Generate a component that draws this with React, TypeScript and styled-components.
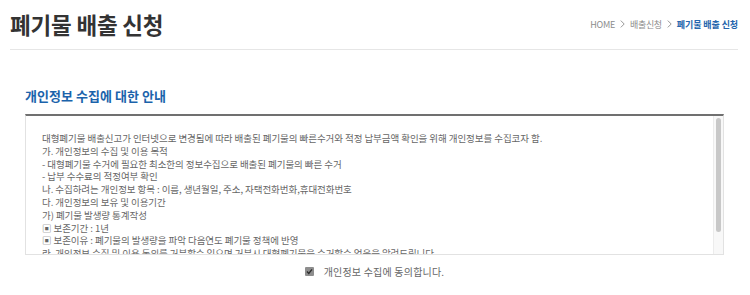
import React from "react";
import styled, { createGlobalStyle } from "styled-components";

const GlobalStyle = createGlobalStyle`
  html, body {
    margin: 0;
    padding: 0;
    background: #ffffff;
  }
  body {
    font-family: "Noto Sans CJK KR", "Noto Sans", sans-serif;
    color: #333;
  }
  * { box-sizing: border-box; }
`;

const Page = styled.div`
  width: 750px;
  padding: 0 12px 0 10px;
`;

const Header = styled.header`
  display: flex;
  align-items: center;
  justify-content: space-between;
  height: 50px;
  border-bottom: 1px solid #e6e6e6;
`;

const Title = styled.h1`
  margin: 0;
  font-size: 22.5px;
  font-weight: 700;
  color: #333;
  letter-spacing: -0.2px;
  line-height: 1;
  padding-bottom: 1px;
`;

const Breadcrumb = styled.nav`
  display: flex;
  align-items: center;
  gap: 5px;
  font-size: 9px;
  color: #8c8c8c;
  letter-spacing: -0.3px;
  padding-bottom: 1px;
`;

const Crumb = styled.span<{ $current?: boolean }>`
  color: ${(p) => (p.$current ? "#2566ad" : "#8c8c8c")};
  font-weight: ${(p) => (p.$current ? 700 : 400)};
  letter-spacing: ${(p) => (p.$current ? "-0.1px" : "-0.3px")};
`;

const Chevron = styled.svg`
  width: 5px;
  height: 8px;
  display: block;
`;

const Section = styled.section`
  padding: 0 14px 0 15px;
`;

const SectionTitle = styled.h2`
  margin: 38px 0 10px;
  font-size: 13px;
  line-height: 16px;
  font-weight: 700;
  color: #1b63ab;
  letter-spacing: 0.05px;
`;

const TermsBox = styled.div`
  display: flex;
  height: 141px;
  border: 1px solid #e2e2e2;
  border-top: 2px solid #707070;
  overflow: hidden;
`;

const TermsText = styled.div`
  flex: 1;
  overflow: hidden;
  padding: 16px 16px 0 16px;
  font-size: 9.5px;
  line-height: 12.8px;
  color: #666;
  letter-spacing: -0.06px;
`;

const ScrollTrack = styled.div`
  width: 10px;
  flex: none;
  background: #f8f8f8;
  border-left: 1px solid #ececec;
  padding: 2px 2px 0 2px;
`;

const ScrollThumb = styled.div`
  width: 5px;
  height: 114px;
  border-radius: 3px;
  background: #c8c8c8;
`;

const Line = styled.p`
  margin: 0;
  white-space: nowrap;
`;

const AgreeRow = styled.label`
  display: flex;
  align-items: center;
  justify-content: center;
  gap: 10px;
  height: 16px;
  margin-top: 8px;
  font-size: 10px;
  color: #666;
  letter-spacing: 0.2px;
  cursor: pointer;
`;

const CheckIcon = styled.svg`
  width: 9px;
  height: 9px;
  display: block;
`;

const lines = [
  "대형폐기물 배출신고가 인터넷으로 변경됨에 따라 배출된 폐기물의 빠른수거와 적정 납부금액 확인을 위해 개인정보를 수집코자 함.",
  "가. 개인정보의 수집 및 이용 목적",
  "- 대형폐기물 수거에 필요한 최소한의 정보수집으로 배출된 폐기물의 빠른 수거",
  "- 납부 수수료의 적정여부 확인",
  "나. 수집하려는 개인정보 항목 : 이름, 생년월일, 주소, 자택전화번화,휴대전화번호",
  "다. 개인정보의 보유 및 이용기간",
  "가) 폐기물 발생량 통계작성",
  "▣ 보존기간 : 1년",
  "▣ 보존이유 : 폐기물의 발생량을 파악 다음연도 폐기물 정책에 반영",
  "라. 개인정보 수집 및 이용 동의를 거부할수 있으며 거부시 대형폐기물을 수거할수 없음을 알려드립니다.",
];

const Sep = () => (
  <Chevron viewBox="0 0 5 8">
    <path d="M0.8 0.6 L4.2 4 L0.8 7.4" fill="none" stroke="#8c8c8c" strokeWidth="0.9" />
  </Chevron>
);

export default function App() {
  return (
    <>
      <GlobalStyle />
      <Page>
        <Header>
          <Title>폐기물 배출 신청</Title>
          <Breadcrumb>
            <Crumb>HOME</Crumb>
            <Sep />
            <Crumb>배출신청</Crumb>
            <Sep />
            <Crumb $current>폐기물 배출 신청</Crumb>
          </Breadcrumb>
        </Header>
        <Section>
          <SectionTitle>개인정보 수집에 대한 안내</SectionTitle>
          <TermsBox>
            <TermsText>
              {lines.map((l, i) => (
                <Line key={i}>{l}</Line>
              ))}
            </TermsText>
            <ScrollTrack>
              <ScrollThumb />
            </ScrollTrack>
          </TermsBox>
          <AgreeRow>
            <CheckIcon viewBox="0 0 9 9">
              <rect x="0" y="0" width="9" height="9" rx="1" fill="#8e8e8e" />
              <path d="M2 4.6 L3.8 6.4 L7 2.4" fill="none" stroke="#2e2e2e" strokeWidth="1.4" />
            </CheckIcon>
            <span>개인정보 수집에 동의합니다.</span>
          </AgreeRow>
        </Section>
      </Page>
    </>
  );
}
